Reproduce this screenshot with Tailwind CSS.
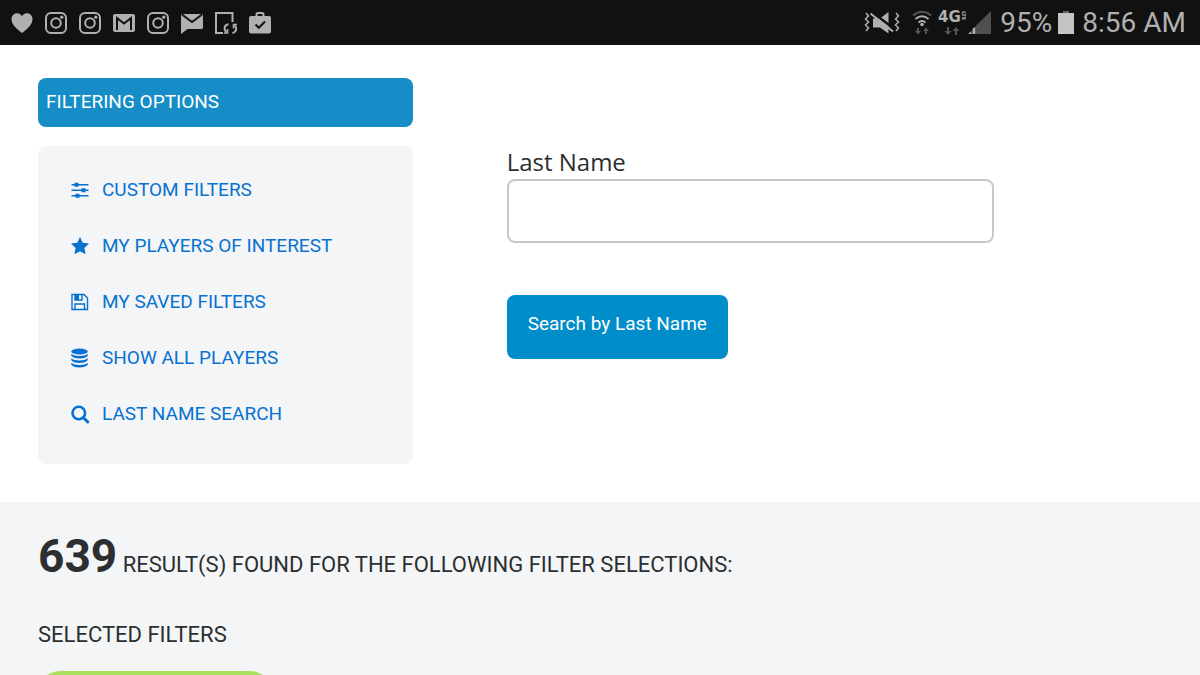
<!DOCTYPE html>
<html lang="en">
<head>
  <meta charset="UTF-8" />
  <meta name="viewport" content="width=device-width, initial-scale=1.0" />
  <title>Player Search</title>
  <script src="https://cdn.jsdelivr.net/npm/@tailwindcss/browser@4"></script>
</head>
<body class="bg-white font-[Roboto,sans-serif] text-[#2c2e30] min-h-screen flex flex-col overflow-x-hidden">

  <!-- icons used more than once -->
  <svg class="hidden">
    <symbol id="instagram" viewBox="0 0 22 22">
      <rect x="1" y="1" width="20" height="20" rx="5" fill="none" stroke="currentColor" stroke-width="2"/>
      <circle cx="11" cy="11" r="4.8" fill="none" stroke="currentColor" stroke-width="2"/>
      <circle cx="16.8" cy="5.2" r="1.6" fill="currentColor"/>
    </symbol>
  </svg>

  <!-- Status bar -->
  <header class="bg-[#111111] h-[45px] shrink-0 flex items-center justify-between pl-[11px] pr-[14px] text-[#b0b0b0]">
    <div class="flex items-center gap-3">
      <svg class="w-[22px] h-[22px]" viewBox="0 0 22 22" fill="currentColor"><path d="M11 21C8 18.600 .5 13.500 .5 7.300C.5 3.700 3 1.300 6 1.300C8.200 1.300 10 2.500 11 4.300C12 2.500 13.800 1.300 16 1.300C19 1.300 21.500 3.700 21.500 7.300C21.500 13.500 14 18.600 11 21Z"/></svg>
      <svg class="w-[22px] h-[22px]"><use href="#instagram"/></svg>
      <svg class="w-[22px] h-[22px]"><use href="#instagram"/></svg>
      <svg class="w-[22px] h-[22px]" viewBox="0 0 22 22"><rect y="2" width="22" height="18" rx="2" fill="currentColor"/><path d="M4 18V6L11 11.500L18 6V18" fill="none" stroke="#111111" stroke-width="2"/></svg>
      <svg class="w-[22px] h-[22px]"><use href="#instagram"/></svg>
      <svg class="w-[22px] h-[22px]" viewBox="0 0 22 22"><path d="M0 3.500Q0 2 1.500 2H20.500Q22 2 22 3.500V15.500Q22 17 20.500 17H6.500L0 22Z" fill="currentColor"/><path d="M1 2.500L11 10L21 2.500" fill="none" stroke="#111111" stroke-width="2"/></svg>
      <svg class="w-[22px] h-[22px]" viewBox="0 0 22 22" fill="none" stroke="currentColor" stroke-width="2"><path d="M8 21H1V1H17.500V10"/><path d="M13.500 12.300C9 13 8.500 18 11.500 20M17.500 21.200C22 20 22 15.500 19.500 13.500"/><path d="M9 21H12.500V17M22 12.500H18.500V16.500" stroke-width="1.600"/></svg>
      <svg class="w-[22px] h-[22px]" viewBox="0 0 22 22"><path d="M7.500 5V2.500Q7.500 1 9 1H13Q14.500 1 14.500 2.500V5" fill="none" stroke="currentColor" stroke-width="2"/><rect y="4" width="22" height="17.500" rx="2" fill="currentColor"/><path d="M6.500 12.500L9.800 15.800L16 9.500" fill="none" stroke="#111111" stroke-width="2"/></svg>
    </div>

    <div class="flex items-center">
      <svg class="w-9 h-6 mr-3" viewBox="0 0 36 24"><path d="M9 7.500H16L24.500 1V22.500L16 16.500H9Z" fill="currentColor"/><path d="M8 1L31 18.500" stroke="#111111" stroke-width="2.500"/><path d="M6.500 2.500L29 20.500" stroke="currentColor" stroke-width="2"/><path d="M2 2L4.500 5L1.500 8L4.500 11L1.500 14L4.500 17L2 20M32 2L34.500 5L31.500 8L34.500 11L31.500 14L34.500 17L32 20" fill="none" stroke="currentColor" stroke-width="1.500"/></svg>
      <svg class="w-5 h-6 mr-1" viewBox="0 0 20 24" fill="none" stroke="currentColor" stroke-width="2"><path d="M1 4.500Q10 -3 19 4.500" stroke="#555"/><path d="M3.500 8Q10 2.500 16.500 8M6.500 11.500Q10 8.500 13.500 11.500"/><circle cx="10" cy="13.500" r="1.800" fill="currentColor" stroke="none"/><path d="M6 17V21M14 23V19" stroke="#555"/><path d="M3 20H9L6 23.500ZM11 20H17L14 16.500Z" fill="#555" stroke="none"/></svg>
      <div class="w-8 h-6 flex flex-col items-center">
        <div class="flex items-start h-3 font-bold font-['DejaVu_Sans',sans-serif]">
          <span class="text-[15px] leading-3">4G</span>
          <span class="text-[5px] leading-[6px] [writing-mode:vertical-rl]">LTE</span>
        </div>
        <svg class="w-4 h-2 mt-1" viewBox="0 0 16 8" fill="#555"><path d="M3 0H5V4H7.500L4 8L.5 4H3ZM11 8H13V4H15.500L12 0L8.500 4H11Z"/></svg>
      </div>
      <svg class="w-6 h-6" viewBox="0 0 24 24"><path d="M23 0V23H8V14.500Z" fill="#505050"/><path d="M0 23L3.500 20V23ZM4.500 23V18L7.500 15.500V23Z" fill="currentColor"/></svg>
      <span class="text-[28px] ml-2 mr-1.5">95%</span>
      <svg class="w-4 h-6 mr-2" viewBox="0 0 16 24"><rect x="5" width="6" height="3" fill="#666"/><rect y="2" width="16" height="21" fill="#c4c4c4"/></svg>
      <span class="text-[28px]">8:56 AM</span>
    </div>
  </header>

  <!-- Filters and search -->
  <main class="flex items-start px-[38px] pt-[33px] pb-[38px]">
    <section class="w-1/3 shrink-0">
      <h2 class="bg-[#168dc6] text-white text-[19px] leading-6 rounded-lg px-2 pt-3 pb-[13px]">FILTERING OPTIONS</h2>
      <nav class="bg-[#f3f5f7] text-[#0972cf] text-[19px] leading-6 rounded-lg mt-[19px] px-8 pt-8 pb-[38px] flex flex-col gap-8">
        <a href="#custom" class="flex items-center gap-3">
          <svg class="w-5 h-5" viewBox="0 0 20 20" fill="currentColor"><path d="M1.500 4H18.500V5.500H1.500ZM1.500 9.500H18.500V11H1.500ZM1.500 15H18.500V16.500H1.500Z"/><path d="M4.500 2.800H8.500V6.800H4.500ZM11.500 8.300H15.500V12.300H11.500ZM5.500 13.800H9.500V17.800H5.500Z"/></svg>
          CUSTOM FILTERS
        </a>
        <a href="#interest" class="flex items-center gap-3">
          <svg class="w-5 h-5" viewBox="0 0 20 20" fill="currentColor"><path d="M10 1L12.700 6.800L19 7.600L14.400 12L15.600 18.200L10 15.200L4.400 18.200L5.600 12L1 7.600L7.300 6.800Z"/></svg>
          MY PLAYERS OF INTEREST
        </a>
        <a href="#saved" class="flex items-center gap-3">
          <svg class="w-5 h-5" viewBox="0 0 20 20" fill="none" stroke="currentColor" stroke-width="1.400"><path d="M2 2.500H14L17.500 6V17.500H2ZM5 17V12H14.500V17M5 2.500V8H12V2.500"/><path d="M5 3H9V8H5Z" fill="currentColor" stroke="none"/></svg>
          MY SAVED FILTERS
        </a>
        <a href="#all" class="flex items-center gap-3">
          <svg class="w-5 h-5" viewBox="0 0 20 20" fill="currentColor"><ellipse cx="9.500" cy="3.500" rx="8.300" ry="3"/><path d="M1.200 6Q4 8 9.500 8T17.800 6V7.500Q16 10.500 9.500 10.500T1.200 7.500ZM1.200 10.500Q4 12.500 9.500 12.500T17.800 10.500V12Q16 15 9.500 15T1.200 12ZM1.200 15Q4 17 9.500 17T17.800 15V16.500Q16 19.500 9.500 19.500T1.200 16.500Z"/></svg>
          SHOW ALL PLAYERS
        </a>
        <a href="#search" class="flex items-center gap-3">
          <svg class="w-5 h-5" viewBox="0 0 20 20" fill="none" stroke="currentColor" stroke-width="2.600"><circle cx="8.800" cy="9" r="6.300"/><path d="M13.300 13.500L17.700 17.900" stroke-width="3" stroke-linecap="round"/></svg>
          LAST NAME SEARCH
        </a>
      </nav>
    </section>

    <form class="flex-1 pl-[94px] pr-[168px] pt-[67px]" onsubmit="return false">
      <label for="lastName" class="block text-[24px] leading-[34px] font-['Open_Sans',sans-serif]">Last Name</label>
      <input type="text" id="lastName" class="block w-full h-16 px-4 text-[19px] border-2 border-[#c8c8c8] rounded-lg bg-white">
      <button type="submit" class="block mt-[52px] bg-[#008dca] text-white text-[19px] leading-6 rounded-lg px-[21px] pt-[17px] pb-[23px]">Search by Last Name</button>
    </form>
  </main>

  <!-- Results -->
  <section class="bg-[#f3f5f7] flex-1 px-[38px] pt-6">
    <p class="text-[22px] leading-[60px]"><strong class="text-[46px] font-bold">639</strong> RESULT(S) FOUND FOR THE FOLLOWING FILTER SELECTIONS:</p>
    <h3 class="text-[22px] leading-7 mt-[26px]">SELECTED FILTERS</h3>
    <div class="h-[18px] mt-[22px] overflow-hidden">
      <div class="w-[234px] h-11 rounded-full bg-[#a9df5a]"></div>
    </div>
  </section>
</body>
</html>
